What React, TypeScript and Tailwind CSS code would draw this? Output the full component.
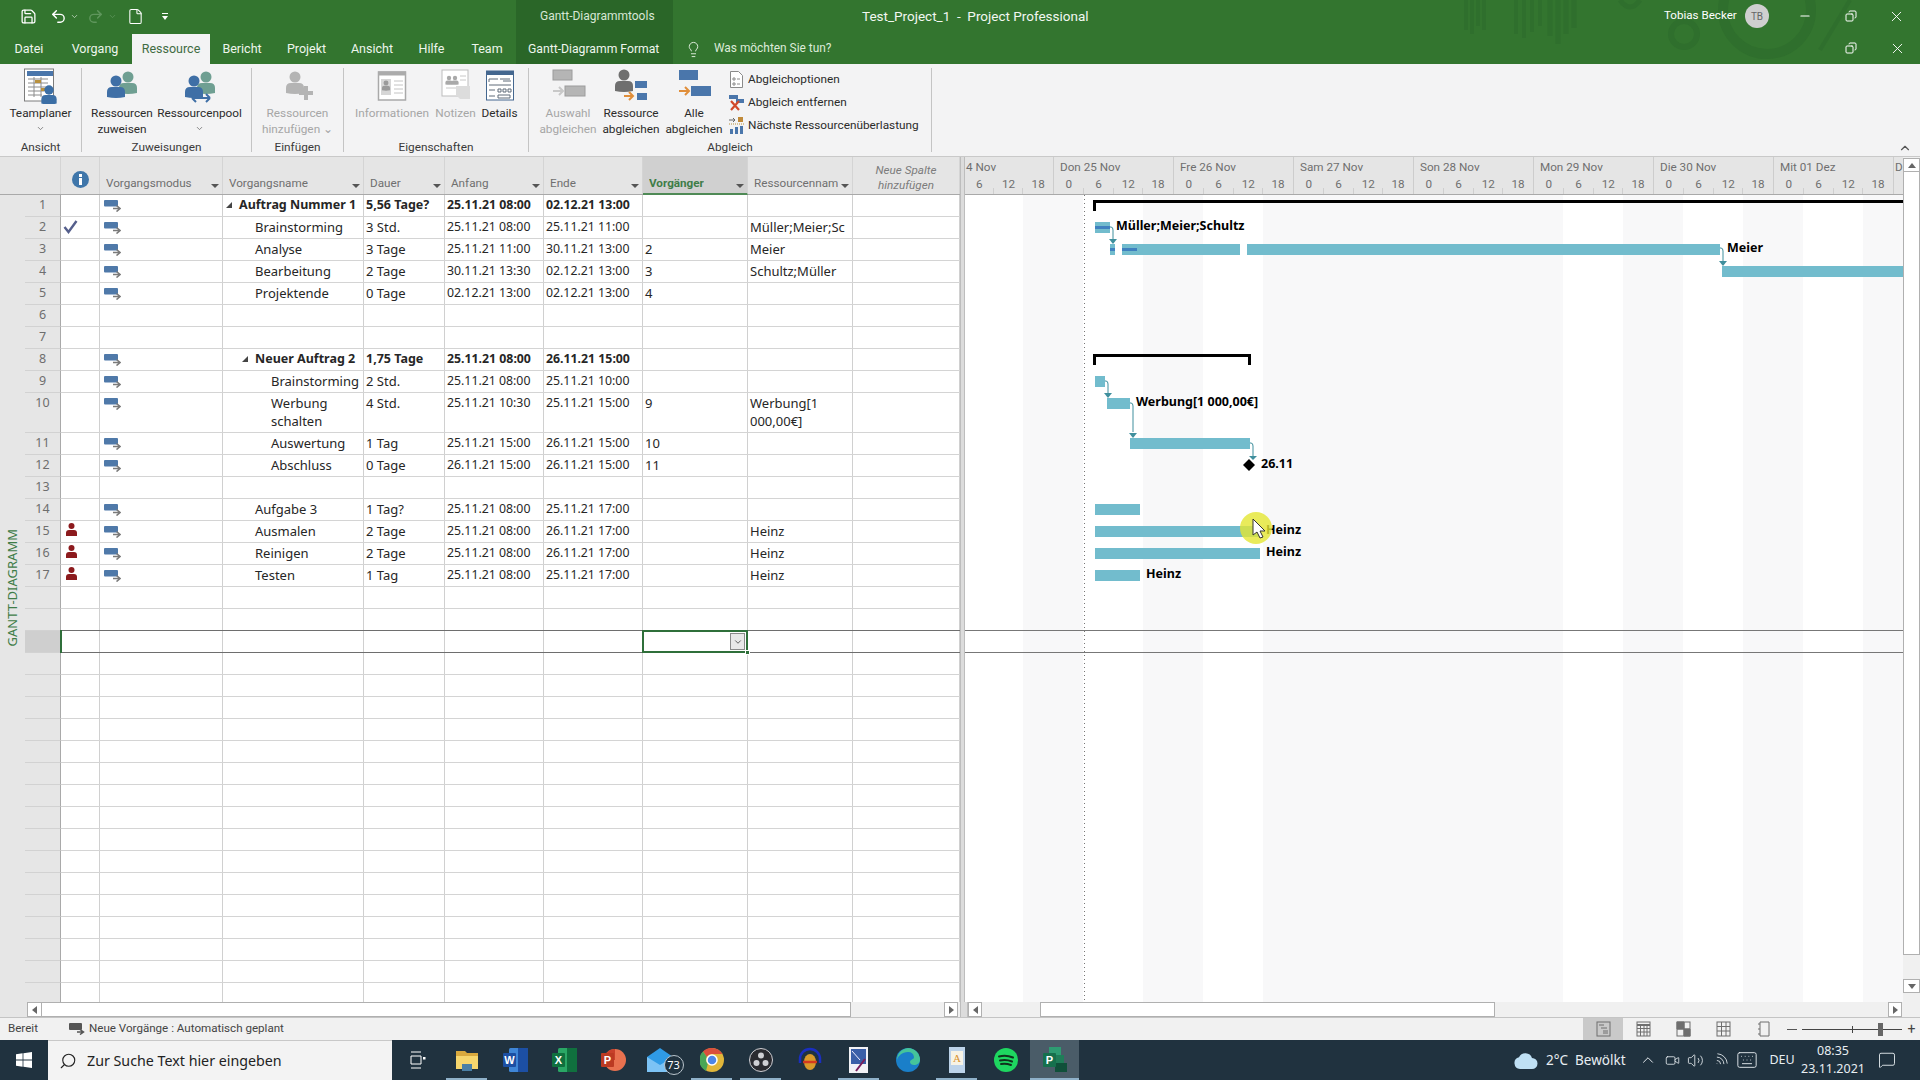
import type { ReactNode } from "react";
import { Save, Undo2, Redo2, File, Lightbulb, Minus, X, Copy, ChevronDown, ChevronUp, Search, Volume2, Wifi, Keyboard, Video, MessageSquare } from "lucide-react";

const tabs = [
  { label: "Datei", w: "w-[58px]" },
  { label: "Vorgang", w: "w-[74px]" },
  { label: "Ressource", w: "w-[78px]", active: true },
  { label: "Bericht", w: "w-[64px]" },
  { label: "Projekt", w: "w-[65px]" },
  { label: "Ansicht", w: "w-[66px]" },
  { label: "Hilfe", w: "w-[53px]" },
  { label: "Team", w: "w-[58px]" },
];

type Task = { n: number; done?: boolean; person?: boolean; mode?: boolean; name?: string; level?: number; bold?: boolean; caret?: boolean; dur?: string; start?: string; end?: string; pred?: string; res?: string; tall?: boolean };

const tasks: Task[] = [
  { n: 1, mode: true, name: "Auftrag Nummer 1", level: 0, bold: true, caret: true, dur: "5,56 Tage?", start: "25.11.21 08:00", end: "02.12.21 13:00" },
  { n: 2, done: true, mode: true, name: "Brainstorming", level: 1, dur: "3 Std.", start: "25.11.21 08:00", end: "25.11.21 11:00", res: "Müller;Meier;Sc" },
  { n: 3, mode: true, name: "Analyse", level: 1, dur: "3 Tage", start: "25.11.21 11:00", end: "30.11.21 13:00", pred: "2", res: "Meier" },
  { n: 4, mode: true, name: "Bearbeitung", level: 1, dur: "2 Tage", start: "30.11.21 13:30", end: "02.12.21 13:00", pred: "3", res: "Schultz;Müller" },
  { n: 5, mode: true, name: "Projektende", level: 1, dur: "0 Tage", start: "02.12.21 13:00", end: "02.12.21 13:00", pred: "4" },
  { n: 6 },
  { n: 7 },
  { n: 8, mode: true, name: "Neuer Auftrag 2", level: 1, bold: true, caret: true, dur: "1,75 Tage", start: "25.11.21 08:00", end: "26.11.21 15:00" },
  { n: 9, mode: true, name: "Brainstorming", level: 2, dur: "2 Std.", start: "25.11.21 08:00", end: "25.11.21 10:00" },
  { n: 10, mode: true, name: "Werbung schalten", level: 2, dur: "4 Std.", start: "25.11.21 10:30", end: "25.11.21 15:00", pred: "9", res: "Werbung[1 000,00€]", tall: true },
  { n: 11, mode: true, name: "Auswertung", level: 2, dur: "1 Tag", start: "25.11.21 15:00", end: "26.11.21 15:00", pred: "10" },
  { n: 12, mode: true, name: "Abschluss", level: 2, dur: "0 Tage", start: "26.11.21 15:00", end: "26.11.21 15:00", pred: "11" },
  { n: 13 },
  { n: 14, mode: true, name: "Aufgabe 3", level: 1, dur: "1 Tag?", start: "25.11.21 08:00", end: "25.11.21 17:00" },
  { n: 15, person: true, mode: true, name: "Ausmalen", level: 1, dur: "2 Tage", start: "25.11.21 08:00", end: "26.11.21 17:00", res: "Heinz" },
  { n: 16, person: true, mode: true, name: "Reinigen", level: 1, dur: "2 Tage", start: "25.11.21 08:00", end: "26.11.21 17:00", res: "Heinz" },
  { n: 17, person: true, mode: true, name: "Testen", level: 1, dur: "1 Tag", start: "25.11.21 08:00", end: "25.11.21 17:00", res: "Heinz" },
];

const blanks = Array.from({ length: 19 }, (_, i) => i);

function Person({ x, y, c, s = 1 }: { x: number; y: number; c: string; s?: number }) {
  return (
    <g transform={`translate(${x} ${y}) scale(${s})`} fill={c}>
      <circle cx="0" cy="0" r="5.5" />
      <path d="M-9 16v-5q0-5 5-5h8q5 0 5 5v5q-9 2-18 0z" />
    </g>
  );
}

function TeamplanerIcon() {
  return (
    <svg width="36" height="36" viewBox="0 0 36 36">
      <rect x="1.5" y="1" width="29" height="32" fill="#fff" stroke="#7c7c7c" />
      <rect x="4" y="3" width="26" height="5" fill="#4a76ab" />
      <path d="M5 11h20M5 15h20M5 19h20M5 23h16M5 27h14M11 9v20M18 9v20" stroke="#8c8c8c" />
      <rect x="12" y="12" width="6" height="3" fill="#b9913d" />
      <rect x="18" y="20" width="6" height="3" fill="#b9913d" />
      <Person x={26} y={22} c="#3b6ea5" s={0.85} />
    </svg>
  );
}

function PeopleIcon({ pool }: { pool?: boolean }) {
  return (
    <svg width="36" height="36" viewBox="0 0 36 36">
      <Person x={24} y={9} c="#6f9f92" />
      <Person x={12} y={13} c="#3f6fa6" />
      {pool && <path d="M10 30h18M10 30l4-4M10 30l4 4M28 30l-4-4M28 30l-4 4" stroke="#3f6fa6" strokeWidth="2" fill="none" />}
    </svg>
  );
}

function AddPersonIcon() {
  return (
    <svg width="36" height="36" viewBox="0 0 36 36">
      <Person x={15} y={9} c="#b4b4b4" />
      <path d="M26 18v14M19 25h14" stroke="#b4b4b4" strokeWidth="4" />
    </svg>
  );
}

function InfoCardIcon() {
  return (
    <svg width="30" height="34" viewBox="0 0 30 34">
      <rect x="1.5" y="3" width="27" height="28" fill="#fff" stroke="#a9a9a9" strokeWidth="1.5" />
      <rect x="1" y="2.5" width="28" height="4" fill="#ababab" />
      <rect x="4" y="10" width="10" height="16" fill="#d6d6d6" />
      <Person x={9} y={14} c="#9a9a9a" s={0.45} />
      <path d="M17 12h9M17 16h9M17 20h9M17 24h9" stroke="#c4c4c4" />
    </svg>
  );
}

function NotesIcon() {
  return (
    <svg width="32" height="36" viewBox="0 0 32 36">
      <rect x="2" y="2" width="26" height="26" fill="#fff" stroke="#bdbdbd" />
      <Person x={9} y={10} c="#a9a9a9" s={0.4} />
      <Person x={15} y={10} c="#a9a9a9" s={0.4} />
      <path d="M20 8h6M20 12h6M6 20h14" stroke="#c8c8c8" />
      <path d="M16 18h14v13h-10l-4-4z" fill="#dcdcdc" />
    </svg>
  );
}

function DetailsIcon() {
  return (
    <svg width="30" height="34" viewBox="0 0 30 34">
      <rect x="1.5" y="2" width="27" height="29" fill="#fff" stroke="#44678f" />
      <rect x="1.5" y="2" width="27" height="4" fill="#44678f" />
      <path d="M4 10h9M15 10h10M4 10v3M18 12h8M4 16h22M4 21h6M13 20h3v3h-3zM18 20h3v3h-3zM23 20h3v3h-3zM4 27h6M13 26h12v3H13z" stroke="#5f6b78" fill="none" />
    </svg>
  );
}

function LevelIcon({ kind }: { kind: "select" | "resource" | "all" }) {
  const bar = kind === "select" ? "#b5b5b5" : "#4a76ab";
  const arrow = kind === "select" ? "#c8c8c8" : "#e08e3a";
  if (kind === "resource") {
    return (
      <svg width="36" height="36" viewBox="0 0 36 36">
        <Person x={11} y={7} c="#6f6f6f" />
        <rect x="22" y="13" width="12" height="7" fill={bar} />
        <rect x="24" y="25" width="10" height="7" fill={bar} />
        <path d="M11 28h9M16 24l4 4-4 4" stroke={arrow} strokeWidth="2" fill="none" />
      </svg>
    );
  }
  return (
    <svg width="36" height="36" viewBox="0 0 36 36">
      <rect x="3" y="2" width="19" height="10" fill={bar} stroke={kind === "select" ? "#9c9c9c" : "none"} />
      <rect x="15" y="18" width="20" height="10" fill={bar} stroke={kind === "select" ? "#9c9c9c" : "none"} />
      <path d="M3 23h10M9 19l4 4-4 4" stroke={arrow} strokeWidth="2" fill="none" />
    </svg>
  );
}

function RibbonBtn({ w, icon, lines, off, chevron }: { w: string; icon: ReactNode; lines: string[]; off?: boolean; chevron?: boolean }) {
  return (
    <div className={`${w} shrink-0 flex flex-col items-center`}>
      <div className="h-[34px] flex items-center justify-center mt-[1px]">{icon}</div>
      <div className={`mt-[2px] flex flex-col items-center leading-[16px] text-[11.8px] whitespace-nowrap ${off ? "text-[#a6a6a6]" : "text-[#2b2b2b]"}`}>
        {lines.map((l) => (
          <span key={l}>{l}</span>
        ))}
        {chevron && <ChevronDown size={9} className="mt-[3px] text-[#666]" />}
      </div>
    </div>
  );
}

function Group({ w, label, children }: { w: string; label: string; children: ReactNode }) {
  return (
    <div className={`${w} h-full flex flex-col pt-1`}>
      <div className="h-[70px] shrink-0 flex">{children}</div>
      <div className="h-[20px] shrink-0 flex items-center justify-center text-[11.8px] text-[#3a3a3a]">{label}</div>
    </div>
  );
}

function Sep() {
  return <div className="w-px my-1 bg-[#c4c4c4]" />;
}

function Ribbon() {
  return (
    <div className="h-[93px] bg-[#f3f3f4] border-b border-[#c9c9c9] flex relative font-['Roboto',sans-serif]">
      <Group w="w-[81px]" label="Ansicht">
        <RibbonBtn w="w-[81px]" icon={<TeamplanerIcon />} lines={["Teamplaner"]} chevron />
      </Group>
      <Sep />
      <Group w="w-[169px]" label="Zuweisungen">
        <RibbonBtn w="w-[80px]" icon={<PeopleIcon />} lines={["Ressourcen", "zuweisen"]} />
        <RibbonBtn w="w-[75px]" icon={<PeopleIcon pool />} lines={["Ressourcenpool"]} chevron />
      </Group>
      <Sep />
      <Group w="w-[91px]" label="Einfügen">
        <RibbonBtn w="w-[91px]" icon={<AddPersonIcon />} lines={["Ressourcen", "hinzufügen ⌄"]} off />
      </Group>
      <Sep />
      <Group w="w-[184px]" label="Eigenschaften">
        <div className="w-1" />
        <RibbonBtn w="w-[88px]" icon={<InfoCardIcon />} lines={["Informationen"]} off />
        <RibbonBtn w="w-[39px]" icon={<NotesIcon />} lines={["Notizen"]} off />
        <RibbonBtn w="w-[49px]" icon={<DetailsIcon />} lines={["Details"]} />
      </Group>
      <Sep />
      <Group w="w-[402px]" label="Abgleich">
        <RibbonBtn w="w-[78px]" icon={<LevelIcon kind="select" />} lines={["Auswahl", "abgleichen"]} off />
        <RibbonBtn w="w-[48px]" icon={<LevelIcon kind="resource" />} lines={["Ressource", "abgleichen"]} />
        <RibbonBtn w="w-[78px]" icon={<LevelIcon kind="all" />} lines={["Alle", "abgleichen"]} />
        <div className="flex flex-col text-[11.8px] text-[#2b2b2b] whitespace-nowrap">
          <div className="h-[23px] flex items-center gap-[4px]">
            <svg width="15" height="17" viewBox="0 0 15 17" className="-ml-[4px]">
              <path d="M1.5.5h8l4 4v12h-12z" fill="#fff" stroke="#8a8a8a" />
              <path d="M4 7h2v2H4zM4 12h2v2H4zM8 8h3M8 13h3" stroke="#8a8a8a" fill="none" />
            </svg>
            <span>Abgleichoptionen</span>
          </div>
          <div className="h-[23px] flex items-center gap-[4px]">
            <svg width="15" height="17" viewBox="0 0 15 17" className="-ml-[4px]">
              <rect x="0" y="1" width="9" height="4" fill="#4a76ab" />
              <rect x="7" y="5" width="8" height="4" fill="#4a76ab" />
              <path d="M2 7l8 9M10 7l-8 9" stroke="#d2492a" strokeWidth="2.2" />
            </svg>
            <span>Abgleich entfernen</span>
          </div>
          <div className="h-[23px] flex items-center gap-[4px]">
            <svg width="15" height="17" viewBox="0 0 15 17" className="-ml-[4px]">
              <path d="M0 3h6M4 1l2 2-2 2" stroke="#666" fill="none" />
              <rect x="9" y="0" width="5" height="5" fill="#c08a3a" />
              <path d="M0 7h15" stroke="#b9913d" strokeDasharray="1 1" />
              <rect x="1" y="12" width="3" height="5" fill="#4a76ab" />
              <rect x="6" y="10" width="3" height="7" fill="#4a76ab" />
              <rect x="11" y="9" width="3" height="8" fill="#4a76ab" />
            </svg>
            <span>Nächste Ressourcenüberlastung</span>
          </div>
        </div>
      </Group>
      <Sep />
      <div className="flex-1 flex items-end justify-end pr-[8px] pb-[1px]">
        <ChevronUp size={14} className="text-[#555]" />
      </div>
    </div>
  );
}

function TitleArt() {
  return (
    <svg width="460" height="64" viewBox="0 0 460 64" className="absolute top-0 left-[1450px]" fill="none" stroke="#2f6f2d">
      <path d="M16 0v30M22 0v34M28 0v26M34 0v30M66 0v34M74 0v38M82 0v32M90 0v26" strokeWidth="4" />
      <path d="M100 0v36M108 0v44M116 0v34M124 0v28" strokeWidth="5" />
      <circle cx="234" cy="34" r="13" strokeWidth="6" />
      <circle cx="317" cy="10" r="44" strokeWidth="10" />
      <path d="M170 0q10 14 20 0" strokeWidth="5" />
      <path d="M400 0l-30 50" strokeWidth="4" />
    </svg>
  );
}

function Header() {
  return (
    <div className="h-16 bg-[#33752f] text-white flex flex-col relative font-['Roboto',sans-serif]">
      <TitleArt />
      <div className="h-8 flex relative">
        <div className="w-[516px] flex items-center">
          <Save size={17} className="ml-[20px]" strokeWidth={1.8} />
          <Undo2 size={17} className="ml-[13px]" strokeWidth={2} />
          <ChevronDown size={9} className="ml-[3px] text-[#cfe0cd]" />
          <Redo2 size={17} className="ml-[8px] text-[#5f965c]" />
          <ChevronDown size={9} className="ml-[4px] text-[#5f965c]" />
          <File size={17} className="ml-[10px]" strokeWidth={1.5} />
          <div className="ml-[18px] flex flex-col items-center gap-[2px]">
            <div className="w-[6px] h-px bg-white" />
            <div className="w-0 h-0 border-x-[3px] border-x-transparent border-t-[4px] border-t-white" />
          </div>
        </div>
        <div className="w-[157px] bg-[#2a6628] flex items-center pl-[24px] text-[12px] text-[#d7e6d5] whitespace-nowrap">Gantt-Diagrammtools</div>
        <div className="w-[189px]" />
        <div className="w-[300px] flex items-center text-[13.5px] whitespace-pre text-[#f2f7f1]">Test_Project_1  -  Project Professional</div>
        <div className="flex-1 flex items-center">
          <div className="ml-[502px] text-[11.6px] whitespace-nowrap w-[81px]">Tobias Becker</div>
          <div className="ml-0 w-6 h-6 rounded-full bg-[#cfcfcf] text-[#666] text-[10px] flex items-center justify-center">TB</div>
          <Minus size={14} className="ml-[29px]" />
          <Copy size={12} className="ml-[33px] -scale-x-100" />
          <X size={17} className="ml-[31px]" strokeWidth={1.3} />
        </div>
      </div>
      <div className="h-8 flex relative text-[12.5px]">
        <div className="w-[516px] flex">
          {tabs.map((t) => (
            <div key={t.label} className={`${t.w} flex items-center justify-center mt-[2px] ${t.active ? "bg-[#f3f3f4] text-[#3f6b42]" : "text-[#eef5ed]"}`}>
              {t.label}
            </div>
          ))}
        </div>
        <div className="w-[157px] bg-[#2a6628] flex items-center pl-[12px] text-[12.2px] text-[#eef5ed] whitespace-nowrap pt-[2px]">Gantt-Diagramm Format</div>
        <div className="flex-1 flex items-center pt-[2px]">
          <Lightbulb size={17} className="ml-[12px] text-[#dcebd9]" strokeWidth={1.4} />
          <span className="ml-[12px] text-[11.9px] text-[#dcebd9]">Was möchten Sie tun?</span>
        </div>
        <Copy size={12} className="absolute left-[1845px] top-[10px] -scale-x-100" />
        <X size={17} className="absolute left-[1889px] top-[8px]" strokeWidth={1.3} />
      </div>
    </div>
  );
}

function ColHead({ w, label, active }: { w: string; label: string; active?: boolean }) {
  return (
    <div className={`${w} flex items-end justify-between pl-[6px] pr-[3px] border-r border-[#d4d4d4] ${active ? "bg-[#d0d0d0] border-b-2 border-b-[#4f8a56] -mb-px text-[#3f7d48] font-bold" : "pb-[1px] text-[#6f6f6f]"}`}>
      <span className="whitespace-nowrap overflow-hidden">{label}</span>
      <span className="mb-[5px] w-0 h-0 shrink-0 border-x-[4px] border-x-transparent border-t-[4px] border-t-[#555]" />
    </div>
  );
}

function ModeIcon() {
  return (
    <svg width="17" height="13" viewBox="0 0 17 13" className="mt-[3px]">
      <rect x="0" y="1" width="14" height="6.5" rx="1" fill="#4f79a9" />
      <path d="M9 9.5h6M12.5 6.5l3.5 3-3.5 3" stroke="#7a7a7a" strokeWidth="1.6" fill="none" />
    </svg>
  );
}

function RedPerson() {
  return (
    <svg width="11" height="13" viewBox="0 0 11 13" fill="#8c1a1d">
      <circle cx="5.5" cy="3" r="3" />
      <path d="M0 13v-3q0-3 3-3h5q3 0 3 3v3z" />
    </svg>
  );
}

function Cell({ w, children, cls = "" }: { w: string; children?: ReactNode; cls?: string }) {
  return <div className={`${w} h-full shrink-0 border-r border-[#d0d0d0] pt-[1px] leading-[18px] ${cls}`}>{children}</div>;
}

function TaskRow({ t }: { t: Task }) {
  const pad = t.level === 0 ? "pl-[16px]" : t.level === 2 ? "pl-[48px]" : "pl-[32px]";
  const b = t.bold ? "font-bold text-[12.5px]" : "";
  const bd = t.bold ? "font-bold" : "";
  return (
    <div className={`${t.tall ? "h-10" : "h-[22px]"} flex border-b border-[#d4d4d4]`}>
      <div className="w-[25px] shrink-0 bg-[#e6e6e6] -mb-px" />
      <div className="w-[36px] shrink-0 bg-[#e6e6e6] border-r border-[#a9a9a9] border-b border-b-[#d2d2d2] -mb-px text-center text-[12.5px] pt-[1px] leading-[18px] text-[#6e6e6e]">{t.n}</div>
      <Cell w="w-[39px]" cls="relative">
        {t.done && (
          <svg width="15" height="14" viewBox="0 0 15 14" className="absolute left-[2px] top-[3px]">
            <path d="M1.5 7l4 5 8-11" stroke="#555f8c" strokeWidth="2.4" fill="none" />
          </svg>
        )}
        {t.person && (
          <div className="absolute left-[5px] top-[2px]">
            <RedPerson />
          </div>
        )}
      </Cell>
      <Cell w="w-[123px]" cls="pl-[4px]">
        {t.mode && <ModeIcon />}
      </Cell>
      <Cell w="w-[141px]" cls={`${pad} ${b} relative`}>
        {t.caret && <span className={`absolute top-[7px] w-0 h-0 border-l-[6px] border-l-transparent border-b-[6px] border-b-[#444] ${t.level === 0 ? "left-[3px]" : "left-[19px]"}`} />}
        {t.name}
      </Cell>
      <Cell w="w-[81px]" cls={`pl-[2px] ${b} whitespace-nowrap`}>{t.dur}</Cell>
      <Cell w="w-[99px]" cls={`pl-[2px] text-[12.3px] ${bd} whitespace-nowrap`}>{t.start}</Cell>
      <Cell w="w-[99px]" cls={`pl-[2px] text-[12.3px] ${bd} whitespace-nowrap`}>{t.end}</Cell>
      <Cell w="w-[105px]" cls="pl-[2px]">{t.pred}</Cell>
      <Cell w="w-[105px]" cls="pl-[2px] overflow-hidden">{t.res}</Cell>
      <Cell w="w-[107px]" />
    </div>
  );
}

function TaskTable() {
  return (
    <div className="w-[960px] shrink-0 flex flex-col">
      <div className="h-[38px] flex bg-[#e5e5e5] border-b border-[#a9a9a9] text-[11.7px] font-['Roboto',sans-serif]">
        <div className="w-[61px] border-r border-[#d4d4d4]" />
        <div className="w-[39px] border-r border-[#d4d4d4] flex justify-center pt-[14px]">
          <svg width="17" height="17" viewBox="0 0 17 17">
            <circle cx="8.5" cy="8.5" r="8.5" fill="#3f76aa" />
            <rect x="7" y="7" width="3" height="7" fill="#fff" />
            <rect x="7" y="3" width="3" height="3" fill="#fff" />
          </svg>
        </div>
        <ColHead w="w-[123px]" label="Vorgangsmodus" />
        <ColHead w="w-[141px]" label="Vorgangsname" />
        <ColHead w="w-[81px]" label="Dauer" />
        <ColHead w="w-[99px]" label="Anfang" />
        <ColHead w="w-[99px]" label="Ende" />
        <ColHead w="w-[105px]" label="Vorgänger" active />
        <ColHead w="w-[105px]" label="Ressourcennam" />
        <div className="w-[107px] flex items-center justify-center text-center italic text-[11.7px] leading-[15px] text-[#7c7c7c] border-r border-[#d4d4d4] pt-[4px]">
          Neue Spalte
          <br />
          hinzufügen
        </div>
      </div>
      <div className="h-[807px] overflow-hidden relative text-[13px] text-[#262626]">
        {tasks.map((t) => (
          <TaskRow key={t.n} t={t} />
        ))}
        {blanks.map((i) => (
          <div key={i} className="h-[22px] flex border-b border-[#d4d4d4]">
            <div className={`w-[25px] shrink-0 bg-[#e6e6e6] -mb-px`} />
            <div className={`w-[36px] shrink-0 border-r border-[#a9a9a9] border-b border-b-[#d2d2d2] -mb-px ${i === 2 ? "bg-[#cfcfcf]" : "bg-[#e6e6e6]"}`} />
            <Cell w="w-[39px]" />
            <Cell w="w-[123px]" />
            <Cell w="w-[141px]" />
            <Cell w="w-[81px]" />
            <Cell w="w-[99px]" />
            <Cell w="w-[99px]" />
            <Cell w="w-[105px]" />
            <Cell w="w-[105px]" />
            <Cell w="w-[107px]" />
          </div>
        ))}
        <div className="absolute left-[60px] top-[435px] w-[900px] h-[23px] border-y border-[#6e6e6e]" />
        <div className="absolute left-[60px] top-[435px] w-[2px] h-[23px] bg-[#2f6f3a]" />
        <div className="absolute left-[642px] top-[435px] w-[106px] h-[23px] border-2 border-[#2f6f3a] flex justify-end">
          <div className="w-[15px] h-[17px] mt-[1px] mr-[1px] bg-[#e8e8e8] border border-[#8a8a8a] flex items-center justify-center">
            <ChevronDown size={10} className="text-[#444]" />
          </div>
        </div>
        <div className="absolute left-[745px] top-[455px] w-[5px] h-[5px] bg-[#2f6f3a] border border-white" />
      </div>
    </div>
  );
}

const days = ["Don 25 Nov", "Fre 26 Nov", "Sam 27 Nov", "Son 28 Nov", "Mon 29 Nov", "Die 30 Nov", "Mit 01 Dez"];
const hours = ["0", "6", "12", "18"];

function HourCell({ h, w, last }: { h: string; w: string; last?: boolean }) {
  return (
    <div className={`${w} h-full relative flex items-center justify-center`}>
      {h}
      {!last && <span className="absolute right-0 bottom-0 w-px h-[6px] bg-[#cfcfcf]" />}
    </div>
  );
}

function ChartHead() {
  return (
    <div className="h-[38px] flex bg-[#e5e5e5] border-b border-[#a9a9a9] text-[11.7px] text-[#6f6f6f] overflow-hidden font-['Roboto',sans-serif]">
      <div className="w-[89px] shrink-0 border-r border-[#cdcdcd]">
        <div className="h-[19px] pt-[2px] leading-[17px] pl-[1px] whitespace-nowrap">4 Nov</div>
        <div className="h-[18px] flex">
          <HourCell h="6" w="w-[29px]" />
          <HourCell h="12" w="w-[30px]" />
          <HourCell h="18" w="w-[30px]" last />
        </div>
      </div>
      {days.map((d) => (
        <div key={d} className="w-[120px] shrink-0 border-r border-[#cdcdcd]">
          <div className="h-[19px] pt-[2px] leading-[17px] pl-[6px] whitespace-nowrap">{d}</div>
          <div className="h-[18px] flex">
            {hours.map((h, i) => (
              <HourCell key={h} h={h} w="w-[30px]" last={i === 3} />
            ))}
          </div>
        </div>
      ))}
      <div className="w-[9px] shrink-0 pl-[1px] pt-[2px] leading-[17px]">D</div>
    </div>
  );
}

const barCls = "absolute h-[11px] bg-[#72bccd]";
const progCls = "absolute h-[3px] bg-[#3f81bf]";
const sumCls = "absolute bg-black";
const labelCls = "absolute text-[12.5px] font-bold leading-[18px] whitespace-nowrap text-black";

function Chart() {
  return (
    <div className="flex-1 flex flex-col min-w-0">
      <ChartHead />
      <div className="h-[807px] relative overflow-hidden bg-white">
        <div className="absolute inset-0 flex">
          <div className="w-[58px]" />
          <div className="w-[60px] bg-[#f8f8f9]" />
          <div className="w-[60px]" />
          <div className="w-[60px] bg-[#f8f8f9]" />
          <div className="w-[60px]" />
          <div className="w-[300px] bg-[#f8f8f9]" />
          <div className="w-[60px]" />
          <div className="w-[60px] bg-[#f8f8f9]" />
          <div className="w-[60px]" />
          <div className="w-[60px] bg-[#f8f8f9]" />
          <div className="w-[60px]" />
          <div className="w-[40px] bg-[#f8f8f9]" />
        </div>
        <div className="absolute left-[119px] top-0 h-full w-px bg-[repeating-linear-gradient(to_bottom,#777_0,#777_1px,transparent_1px,transparent_4px)]" />
        <div className="absolute left-0 top-[435px] w-full h-[23px] border-y border-[#777]" />

        <div className={`${sumCls} left-[128px] top-[5px] w-[810px] h-[3px]`} />
        <div className={`${sumCls} left-[128px] top-[5px] w-[3px] h-[11px]`} />

        <div className={`${barCls} left-[130px] top-[27px] w-[15px]`} />
        <div className={`${progCls} left-[130px] top-[31px] w-[15px]`} />
        <div className={`${barCls} left-[145px] top-[49px] w-[5px]`} />
        <div className={`${progCls} left-[145px] top-[53px] w-[5px]`} />
        <div className={`${barCls} left-[157px] top-[49px] w-[118px]`} />
        <div className={`${progCls} left-[157px] top-[53px] w-[15px]`} />
        <div className={`${barCls} left-[282px] top-[49px] w-[473px]`} />
        <div className={`${barCls} left-[757px] top-[71px] w-[181px]`} />

        <div className={`${sumCls} left-[128px] top-[159px] w-[158px] h-[3px]`} />
        <div className={`${sumCls} left-[128px] top-[159px] w-[3px] h-[11px]`} />
        <div className={`${sumCls} left-[283px] top-[159px] w-[3px] h-[11px]`} />

        <div className={`${barCls} left-[130px] top-[181px] w-[10px]`} />
        <div className={`${barCls} left-[142px] top-[203px] w-[23px]`} />
        <div className={`${barCls} left-[165px] top-[243px] w-[120px]`} />
        <div className={`${barCls} left-[130px] top-[309px] w-[45px]`} />
        <div className={`${barCls} left-[130px] top-[331px] w-[165px]`} />
        <div className={`${barCls} left-[130px] top-[353px] w-[165px]`} />
        <div className={`${barCls} left-[130px] top-[375px] w-[45px]`} />

        <svg width="938" height="300" viewBox="0 0 938 300" className="absolute left-0 top-0" fill="none">
          <g stroke="#3f8f9d">
            <path d="M145 32h1q2 0 2 3v9" />
            <path d="M755 53h1q2 0 2 3v10" />
            <path d="M140 186h1q2 0 2 3v9" />
            <path d="M165 208h1q2 0 2 3v26" />
            <path d="M285 248h1q2 0 2 3v10" />
          </g>
          <g fill="#3f8f9d">
            <polygon points="144,44 152,44 148,49" />
            <polygon points="754,66 762,66 758,71" />
            <polygon points="139,198 147,198 143,203" />
            <polygon points="164,238 172,238 168,243" />
            <polygon points="284,261 292,261 288,265" />
          </g>
          <polygon points="284,264 290,270 284,276 278,270" fill="#000" />
        </svg>

        <div className={`${labelCls} left-[151px] top-[22px]`}>Müller;Meier;Schultz</div>
        <div className={`${labelCls} left-[762px] top-[44px]`}>Meier</div>
        <div className={`${labelCls} left-[171px] top-[198px]`}>Werbung[1 000,00€]</div>
        <div className={`${labelCls} left-[296px] top-[260px]`}>26.11</div>
        <div className={`${labelCls} left-[301px] top-[326px]`}>Heinz</div>
        <div className={`${labelCls} left-[301px] top-[348px]`}>Heinz</div>
        <div className={`${labelCls} left-[181px] top-[370px]`}>Heinz</div>

        <div className="absolute left-[275px] top-[317px] w-8 h-8 rounded-full bg-[#e4e632]/80" />
        <svg width="14" height="22" viewBox="0 0 14 22" className="absolute left-[287px] top-[323px]">
          <path d="M1 1v16l4-3 3 6 3-1-3-6h5z" fill="#fff" stroke="#333" />
        </svg>
      </div>
    </div>
  );
}

function ScrollBtn({ dir, cls = "" }: { dir: "left" | "right"; cls?: string }) {
  return (
    <div className={`h-[15px] bg-white border border-[#b0b0b0] flex items-center justify-center ${cls}`}>
      <span className={`w-0 h-0 border-y-[4px] border-y-transparent ${dir === "left" ? "border-r-[5px] border-r-[#666]" : "border-l-[5px] border-l-[#666]"}`} />
    </div>
  );
}

function VScroll() {
  return (
    <div className="w-[17px] shrink-0 bg-[#f0f0f0] flex flex-col pt-[1px]">
      <div className="h-[14px] bg-white border border-[#b0b0b0] flex items-center justify-center">
        <span className="w-0 h-0 border-x-[4px] border-x-transparent border-b-[5px] border-b-[#666]" />
      </div>
      <div className="h-[783px] bg-white border-x border-b border-[#b0b0b0]" />
      <div className="flex-1" />
      <div className="h-[14px] bg-white border border-[#b0b0b0] flex items-center justify-center mb-[9px]">
        <span className="w-0 h-0 border-x-[4px] border-x-transparent border-t-[5px] border-t-[#666]" />
      </div>
    </div>
  );
}

function Main() {
  return (
    <div className="h-[845px] flex relative">
      <TaskTable />
      <div className="w-[5px] shrink-0 bg-[#dcdcdc] border-x border-[#bdbdbd]" />
      <Chart />
      <VScroll />
      <div className="absolute left-0 top-[361px] w-[25px] h-[140px] flex items-center justify-center">
        <span className="[writing-mode:vertical-rl] rotate-180 text-[13px] text-[#3f7d48] whitespace-nowrap">GANTT-DIAGRAMM</span>
      </div>
    </div>
  );
}

function ScrollRow() {
  return (
    <div className="h-4 flex bg-[#f0f0f0] border-b border-[#c4c4c4]">
      <div className="w-[27px] bg-[#e6e6e6]" />
      <ScrollBtn dir="left" cls="w-[15px]" />
      <div className="w-[809px] h-[15px] bg-white border-y border-r border-[#b0b0b0]" />
      <div className="w-[93px]" />
      <ScrollBtn dir="right" cls="w-[14px]" />
      <div className="w-[2px]" />
      <div className="w-[8px] bg-[#dcdcdc] border-x border-[#bdbdbd]" />
      <ScrollBtn dir="left" cls="w-[14px]" />
      <div className="w-[58px]" />
      <div className="w-[455px] h-[15px] bg-white border border-[#b0b0b0]" />
      <div className="w-[393px]" />
      <ScrollBtn dir="right" cls="w-[14px]" />
    </div>
  );
}

function ViewIcon({ kind }: { kind: number }) {
  return (
    <svg width="15" height="16" viewBox="0 0 15 16" fill="none" stroke="#6e6e6e">
      <rect x="1" y="1" width="13" height="14" stroke={kind === 4 ? "none" : "#6e6e6e"} />
      {kind === 0 && <path d="M3 4h5M5 7h6M7 10h5M7 12h5" />}
      {kind === 1 && <path d="M1 3.5h13M1 4.5h13M1 7.5h13M1 11h13M4.5 4v11M8 4v11M11 4v11" />}
      {kind === 2 && <path d="M1 8h13M8 1v14M1 1h7v7H1zM8 8h6v7H8z" fill="#6e6e6e" />}
      {kind === 3 && <path d="M1 5.5h13M1 10h13M5.5 1v14M10 1v14" />}
      {kind === 4 && <path d="M4 1h9v14H4zM4 3H2M4 8H2M4 13H2" />}
    </svg>
  );
}

function StatusBar() {
  return (
    <div className="h-[22px] bg-[#f1f1f1] flex items-center text-[11.6px] text-[#444] font-['Roboto',sans-serif]">
      <div className="w-[68px] pl-[8px]">Bereit</div>
      <svg width="16" height="12" viewBox="0 0 16 12" className="ml-[1px]">
        <rect x="0" y="0" width="13" height="7" rx="1" fill="#555" />
        <path d="M8 9h6M11 6.5l3.5 2.5-3.5 2.5" stroke="#555" strokeWidth="1.5" fill="none" />
      </svg>
      <span className="ml-[4px] whitespace-nowrap">Neue Vorgänge : Automatisch geplant</span>
      <div className="ml-auto flex items-center h-full">
        <div className="w-10 h-full bg-[#c9c9c9] flex items-center justify-center"><ViewIcon kind={0} /></div>
        <div className="w-10 h-full flex items-center justify-center"><ViewIcon kind={1} /></div>
        <div className="w-10 h-full flex items-center justify-center"><ViewIcon kind={2} /></div>
        <div className="w-10 h-full flex items-center justify-center"><ViewIcon kind={3} /></div>
        <div className="w-10 h-full flex items-center justify-center"><ViewIcon kind={4} /></div>
        <div className="w-[4px]" />
        <div className="w-[10px] h-px bg-[#555]" />
        <div className="w-[5px]" />
        <div className="w-[100px] h-px bg-[#444] relative">
          <div className="absolute left-[50px] -top-[3px] w-px h-[7px] bg-[#444]" />
          <div className="absolute left-[76px] -top-[6px] w-[5px] h-[13px] bg-[#666]" />
        </div>
        <span className="ml-[3px] mr-[2px] text-[14px] text-[#444] w-[13px] text-center">+</span>
      </div>
    </div>
  );
}

function WinLogo() {
  return (
    <svg width="16" height="16" viewBox="0 0 16 16" fill="#fff">
      <path d="M0 2.2l6.6-.9v6.3H0zM7.4 1.2L16 0v7.6H7.4zM0 8.4h6.6v6.3L0 13.8zM7.4 8.4H16V16l-8.6-1.2z" />
    </svg>
  );
}

function OfficeIcon({ bg, dark, letter }: { bg: string; dark: string; letter: string }) {
  return (
    <svg width="25" height="26" viewBox="0 0 25 26">
      <rect x="6" y="1" width="19" height="24" rx="1.5" fill={bg} />
      <rect x="15" y="1" width="10" height="24" fill={dark} />
      <rect x="0" y="6" width="13" height="14" rx="1" fill={dark} />
      <text x="6.5" y="17" textAnchor="middle" fontSize="11" fontWeight="700" fill="#fff" fontFamily="'Liberation Sans', sans-serif">{letter}</text>
    </svg>
  );
}

function TaskIcon({ children, lit, line }: { children: ReactNode; lit?: boolean; line?: boolean }) {
  return (
    <div className={`w-[49px] h-full relative flex items-center justify-center ${lit ? "bg-[#4a5c68]" : ""}`}>
      {children}
      {line && <div className={`absolute bottom-0 h-[2px] bg-[#8fb1c9] ${lit ? "inset-x-0" : "inset-x-[4px]"}`} />}
    </div>
  );
}

function Taskbar() {
  return (
    <div className="h-10 bg-[#20323f] flex text-white">
      <div className="w-12 flex items-center justify-center"><WinLogo /></div>
      <div className="w-[344px] bg-[#f3f3f3] flex items-center border-t border-[#c8c8c8] text-[#222]">
        <Search size={18} className="ml-[11px] -scale-x-100" strokeWidth={1.5} />
        <span className="ml-[10px] text-[14.25px] whitespace-nowrap">Zur Suche Text hier eingeben</span>
      </div>
      <div className="flex pl-px">
        <TaskIcon>
          <svg width="16" height="18" viewBox="0 0 16 18" fill="none" stroke="#fff">
            <path d="M1 1h10M1 17h10M1 5h10v8H1z" />
            <rect x="13" y="6" width="2.5" height="2.5" fill="#fff" stroke="none" />
          </svg>
        </TaskIcon>
        <TaskIcon line>
          <svg width="24" height="24" viewBox="0 0 24 24">
            <path d="M1 3h9l2 2h11v16H1z" fill="#d9a93e" />
            <rect x="1" y="8" width="22" height="13" fill="#f6d66d" />
            <rect x="7" y="16" width="10" height="7" fill="#4a7fa5" />
          </svg>
        </TaskIcon>
        <TaskIcon><OfficeIcon bg="#3f86d6" dark="#1c4fa3" letter="W" /></TaskIcon>
        <TaskIcon><OfficeIcon bg="#2aa765" dark="#10703e" letter="X" /></TaskIcon>
        <TaskIcon>
          <svg width="25" height="26" viewBox="0 0 25 26">
            <circle cx="14" cy="13" r="11" fill="#e8714f" />
            <path d="M14 2a11 11 0 0 0-11 11h11z" fill="#c8402a" />
            <rect x="0" y="6" width="13" height="14" rx="1" fill="#bb3a22" />
            <text x="6.5" y="17" textAnchor="middle" fontSize="11" fontWeight="700" fill="#fff" fontFamily="'Liberation Sans', sans-serif">P</text>
          </svg>
        </TaskIcon>
        <TaskIcon>
          <div className="relative">
            <svg width="26" height="24" viewBox="0 0 26 24" className="-ml-[6px]">
              <path d="M0 9L13 0l13 9v15H0z" fill="#2f9be6" />
              <path d="M0 9l13 8 13-8v15H0z" fill="#7cc3f5" />
            </svg>
            <div className="absolute -right-[11px] top-[7px] w-[20px] h-[20px] rounded-full bg-[#20323f] border border-[#b9c4cc] text-[11px] flex items-center justify-center">73</div>
          </div>
        </TaskIcon>
        <TaskIcon line>
          <svg width="24" height="24" viewBox="0 0 24 24">
            <circle cx="12" cy="12" r="12" fill="#e0b63a" />
            <path d="M12 0a12 12 0 0 1 10.4 6H12a6 6 0 0 0-5.2 3L3 3.6A12 12 0 0 1 12 0z" fill="#d94f3d" />
            <path d="M3 3.6l3.8 5.4a6 6 0 0 0 1 7L6 23A12 12 0 0 1 3 3.6z" fill="#4aa657" />
            <circle cx="12" cy="12" r="5" fill="#4d86e8" stroke="#fff" strokeWidth="1.5" />
          </svg>
        </TaskIcon>
        <TaskIcon line>
          <svg width="24" height="24" viewBox="0 0 24 24">
            <circle cx="12" cy="12" r="11.5" fill="#2a2a30" stroke="#cfcfd4" />
            <circle cx="12" cy="7.5" r="3" fill="#cfcfd4" />
            <circle cx="7.5" cy="15" r="3" fill="#cfcfd4" />
            <circle cx="16.5" cy="15" r="3" fill="#cfcfd4" />
          </svg>
        </TaskIcon>
        <TaskIcon>
          <svg width="24" height="26" viewBox="0 0 24 26">
            <path d="M2 16V12a10 10 0 0 1 20 0v4" stroke="#1a2fc0" strokeWidth="2.5" fill="none" />
            <ellipse cx="12" cy="15" rx="6" ry="8" fill="#d99a2b" />
            <path d="M5 15h14" stroke="#d3391f" strokeWidth="2.5" />
          </svg>
        </TaskIcon>
        <TaskIcon line>
          <svg width="19" height="26" viewBox="0 0 19 26">
            <rect width="19" height="26" fill="#f2f2f6" />
            <rect x="2" y="2" width="15" height="15" fill="#3a5fa8" />
            <path d="M3 4l8 9M2 20h10" stroke="#eef" />
            <path d="M16 12L7 24" stroke="#7a1f5c" strokeWidth="2" />
          </svg>
        </TaskIcon>
        <TaskIcon>
          <svg width="24" height="24" viewBox="0 0 24 24">
            <circle cx="12" cy="12" r="12" fill="#1a7fc9" />
            <path d="M12 0a12 12 0 0 1 12 12c0 3-3 5-6 5-2 0-4-1-4-3 0-3 4-2 4-5a6 6 0 0 0-6-5C6 4 2 8 1 12A12 12 0 0 1 12 0z" fill="#45c49a" />
          </svg>
        </TaskIcon>
        <TaskIcon line>
          <svg width="18" height="26" viewBox="0 0 18 26">
            <rect x="1" y="0" width="16" height="26" fill="#bcd3ea" />
            <rect x="3" y="4" width="12" height="14" fill="#f7f3e5" />
            <text x="9" y="15" textAnchor="middle" fontSize="11" fill="#d9922f" fontFamily="'Liberation Serif', serif">A</text>
          </svg>
        </TaskIcon>
        <TaskIcon>
          <svg width="24" height="24" viewBox="0 0 24 24">
            <circle cx="12" cy="12" r="12" fill="#1ed760" />
            <path d="M5 8.5q7-2 14 1M6 12.5q6-1.5 12 1M7 16q5-1 10 1" stroke="#10321d" strokeWidth="2" fill="none" strokeLinecap="round" />
          </svg>
        </TaskIcon>
        <TaskIcon lit line>
          <svg width="24" height="26" viewBox="0 0 24 26">
            <rect x="6" y="0" width="12" height="9" fill="#2e9c72" />
            <rect x="9" y="8" width="12" height="9" fill="#1f7d58" />
            <rect x="12" y="16" width="12" height="9" fill="#10503a" />
            <rect x="0" y="6" width="13" height="14" rx="1" fill="#16704d" />
            <text x="6.5" y="17" textAnchor="middle" fontSize="11" fontWeight="700" fill="#fff" fontFamily="'Liberation Sans', sans-serif">P</text>
          </svg>
        </TaskIcon>
      </div>
      <div className="flex-1 flex items-center justify-end pr-[23px] text-[13.5px] text-[#e8eef2]">
        <svg width="24" height="18" viewBox="0 0 24 18">
          <path d="M6 18a6 6 0 0 1-1-11.8A7 7 0 0 1 18 7a5.5 5.5 0 0 1 0 11z" fill="#bfe0f4" />
        </svg>
        <div className="w-[79px] ml-[8px] whitespace-pre">2°C  Bewölkt</div>
        <div className="w-5 ml-[13px] flex justify-center"><ChevronUp size={18} strokeWidth={1.3} /></div>
        <div className="w-5 ml-[4px] flex justify-center"><Video size={15} strokeWidth={1.3} /></div>
        <div className="w-5 ml-[3px] flex justify-center"><Volume2 size={17} strokeWidth={1.2} /></div>
        <div className="w-5 ml-[6px] flex justify-center"><Wifi size={16} strokeWidth={1.2} className="rotate-45" /></div>
        <div className="w-6 ml-[4px] flex justify-center"><Keyboard size={22} strokeWidth={1} /></div>
        <div className="w-8 ml-[7px] text-center text-[12.5px]">DEU</div>
        <div className="w-[70px] flex flex-col items-center text-[12.5px] leading-[18px]">
          <span>08:35</span>
          <span>23.11.2021</span>
        </div>
        <div className="w-5 ml-[9px] flex justify-center"><MessageSquare size={18} strokeWidth={1.2} /></div>
      </div>
    </div>
  );
}

export default function App() {
  return (
    <div className="w-[1920px] h-[1080px] flex flex-col overflow-hidden bg-white font-['Noto_Sans','Open_Sans',sans-serif]">
      <Header />
      <Ribbon />
      <Main />
      <ScrollRow />
      <StatusBar />
      <Taskbar />
    </div>
  );
}
